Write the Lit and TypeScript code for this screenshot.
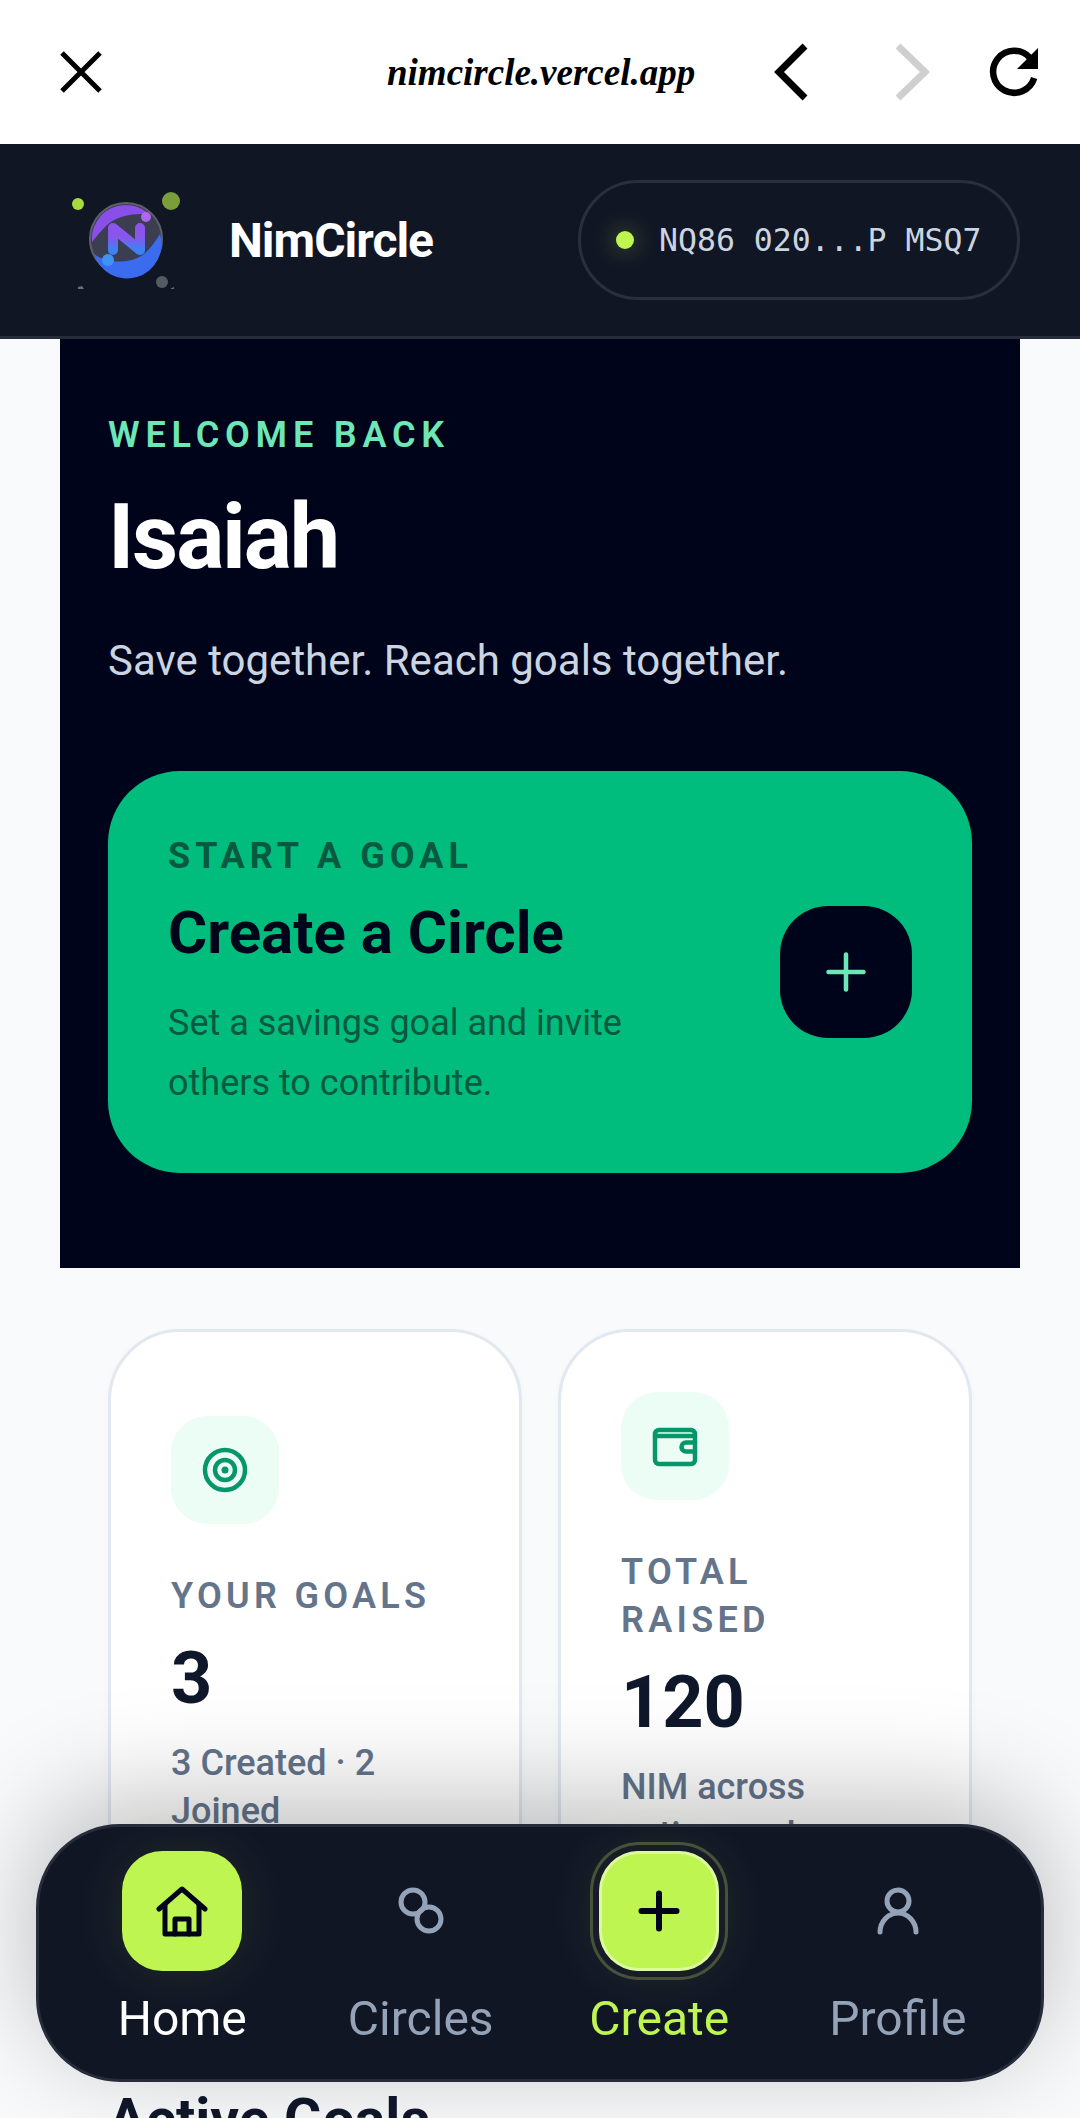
import { LitElement, css, html, svg } from "lit";
import { customElement } from "lit/decorators.js";

const navIcons = {
    home: svg`<path d="M4 25 27 5l23 20" /><path d="M10 20v30h34V20" /><path d="M20 50V35h14v15" />`,
    circles: svg`<circle cx="19" cy="18" r="12" /><circle cx="35" cy="35" r="12" />`,
    plus: svg`<path class="thick" d="M27 9.500v35M9.500 27h35" />`,
    user: svg`<circle cx="27" cy="17" r="11" /><path d="M9 48c0-10 8-19 18-19s18 9 18 19" />`,
};

@customElement("app-root")
export class AppRoot extends LitElement {
    static styles = css`
        :host {
            display: block;
            height: 100vh;
            overflow: hidden;
            background: #f8fafc;
            font-family: Roboto, sans-serif;
            color: #0f172a;
        }
        .chrome {
            height: 144px;
            background: #fff;
            display: flex;
            align-items: center;
        }
        .chrome svg {
            display: block;
            flex: none;
            fill: none;
        }
        .close {
            margin-left: 59px;
            stroke: #000;
        }
        .url {
            margin-left: 284px;
            width: 307px;
            font: italic 700 37px "Liberation Serif", serif;
            color: #000;
            white-space: nowrap;
        }
        .back {
            margin-left: 76px;
            stroke: #000;
        }
        .forward {
            margin-left: 78px;
            stroke: #cfcfcf;
        }
        .reload {
            margin-left: 56px;
            stroke: #000;
        }
        .topbar {
            height: 192px;
            background: #111625;
            border-bottom: 3px solid #272c3b;
            display: flex;
            align-items: center;
            justify-content: space-between;
            padding: 0 60px 0 54px;
        }
        .brand {
            display: flex;
            align-items: center;
            gap: 43px;
            font-size: 48px;
            font-weight: 700;
            letter-spacing: -1px;
            color: #fff;
        }
        .logo {
            display: block;
            width: 132px;
            height: 132px;
        }
        .wallet {
            box-sizing: border-box;
            width: 442px;
            height: 120px;
            border: 3px solid #2a2f3e;
            border-radius: 60px;
            display: flex;
            align-items: center;
            gap: 25px;
            padding-left: 35px;
            font: 31.5px "DejaVu Sans Mono", monospace;
            color: #cbd5e1;
            white-space: pre;
        }
        .dot {
            width: 18px;
            height: 18px;
            border-radius: 50%;
            background: #bef550;
            box-shadow: 0 0 24px rgba(190, 245, 80, 0.45);
        }
        .hero {
            margin: 0 60px;
            height: 929px;
            box-sizing: border-box;
            background: #00041a;
            padding: 69px 48px 0;
        }
        .eyebrow {
            font-size: 36px;
            line-height: 54px;
            font-weight: 600;
            letter-spacing: 5.8px;
            color: #6ee7b7;
        }
        h1 {
            margin: 26px 0 0;
            font-size: 90px;
            line-height: 99px;
            font-weight: 700;
            letter-spacing: -2.2px;
            color: #fff;
        }
        .tagline {
            margin: 44px 0 0;
            font-size: 42px;
            line-height: 60px;
            color: #cbd5e1;
        }
        .cta {
            box-sizing: border-box;
            height: 402px;
            margin-top: 80px;
            border-radius: 72px;
            background: #00bc7d;
            padding: 60px;
            display: flex;
            align-items: center;
            justify-content: space-between;
        }
        .cta-label {
            font-size: 36px;
            line-height: 48px;
            font-weight: 700;
            letter-spacing: 5px;
            color: #07593f;
        }
        .cta-title {
            margin-top: 14px;
            font-size: 60px;
            line-height: 78px;
            font-weight: 700;
            color: #00041a;
        }
        .cta-text {
            margin-top: 21px;
            max-width: 480px;
            font-size: 36px;
            line-height: 60px;
            color: #07593f;
        }
        .cta-btn {
            width: 132px;
            height: 132px;
            border-radius: 48px;
            background: #00041a;
            display: flex;
            align-items: center;
            justify-content: center;
            flex: none;
        }
        .cta-btn svg {
            fill: none;
            stroke: #6ee7b7;
            stroke-width: 4.5;
            stroke-linecap: round;
        }
        .stats {
            display: grid;
            grid-template-columns: 1fr 1fr;
            gap: 36px;
            margin: 61px 108px 0;
        }
        .stat {
            box-sizing: border-box;
            border: 3px solid #e2e8f0;
            border-radius: 72px;
            background: #fff;
            box-shadow: 0 3px 9px rgba(15, 23, 42, 0.03);
            padding: 60px;
            display: flex;
            flex-direction: column;
            justify-content: center;
        }
        .tile {
            width: 108px;
            height: 108px;
            border-radius: 36px;
            background: #ecfdf5;
            display: flex;
            align-items: center;
            justify-content: center;
            margin-bottom: 48px;
        }
        .tile svg {
            fill: none;
            stroke: #059669;
            stroke-width: 4.5;
            stroke-linecap: round;
            stroke-linejoin: round;
        }
        .tile .bullseye {
            fill: #059669;
            stroke: none;
        }
        .stat-label {
            font-size: 36px;
            line-height: 48px;
            font-weight: 600;
            letter-spacing: 4.3px;
            color: #64748b;
        }
        .stat-value {
            margin-top: 17px;
            font-size: 72px;
            line-height: 84px;
            font-weight: 700;
            color: #0f172a;
        }
        .stat-sub {
            margin-top: 18px;
            font-size: 36px;
            line-height: 48px;
            font-weight: 500;
            color: #64748b;
        }
        h2 {
            margin: 165px 108px 0;
            font-size: 57px;
            line-height: 66px;
            font-weight: 700;
            color: #0f172a;
        }
        .nav {
            position: fixed;
            left: 36px;
            right: 36px;
            bottom: 36px;
            box-sizing: border-box;
            height: 258px;
            padding: 24px 24px 0;
            background: #111625;
            border: 3px solid #272c3b;
            border-radius: 84px;
            box-shadow: 0 -24px 108px rgba(0, 0, 0, 0.26);
            display: grid;
            grid-template-columns: repeat(4, 1fr);
        }
        .nav-item {
            display: flex;
            flex-direction: column;
            align-items: center;
            gap: 18px;
            font-size: 48px;
            line-height: 60px;
            color: #94a3b8;
        }
        .nav-item.home {
            color: #fff;
        }
        .nav-item.create {
            color: #bef550;
        }
        .nav-icon {
            width: 120px;
            height: 120px;
            border-radius: 40px;
            display: flex;
            align-items: center;
            justify-content: center;
        }
        .nav-icon svg {
            fill: none;
            stroke: currentColor;
            stroke-width: 5;
            stroke-linecap: round;
            stroke-linejoin: round;
        }
        .nav-icon .thick {
            stroke-width: 6;
        }
        .home .nav-icon,
        .create .nav-icon {
            background: #bef550;
            color: #00041a;
        }
        .home .nav-icon {
            box-shadow: 0 0 60px rgba(190, 245, 80, 0.1);
        }
        .create .nav-icon {
            box-shadow:
                inset 0 0 0 3px rgba(255, 255, 255, 0.45),
                0 0 0 6px #171c28,
                0 0 0 9px #46523a,
                0 0 60px rgba(190, 245, 80, 0.12);
        }
    `;

    private navItem(cls: string, label: string, icon: keyof typeof navIcons) {
        return html`
            <div class="nav-item ${cls}">
                <div class="nav-icon">
                    <svg width="54" height="54" viewBox="0 0 54 54">${navIcons[icon]}</svg>
                </div>
                ${label}
            </div>
        `;
    }

    render() {
        return html`
            <div class="chrome">
                <svg class="close" width="44" height="44" viewBox="0 0 44 44" stroke-width="5">
                    <path d="M3 3l38 38M41 3 3 41" />
                </svg>
                <div class="url">nimcircle.vercel.app</div>
                <svg class="back" width="42" height="60" viewBox="0 0 42 60" stroke-width="7">
                    <path d="M35 4 9 30l26 26" />
                </svg>
                <svg class="forward" width="42" height="60" viewBox="0 0 42 60" stroke-width="7">
                    <path d="M8 4l27 26L8 56" />
                </svg>
                <svg class="reload" width="54" height="54" viewBox="0 0 54 54" stroke-width="6.5">
                    <path d="M46.200 33A21 21 0 1 1 42 13" />
                    <path d="M50 3v21H29z" fill="#000" stroke="none" />
                </svg>
            </div>
            <div class="topbar">
                <div class="brand">
                    <svg class="logo" viewBox="0 0 132 132">
                        <defs>
                            <linearGradient id="nfill" x1="0" y1="0" x2="0" y2="1">
                                <stop offset="0.4" stop-color="#8a55ea" />
                                <stop offset="1" stop-color="#3b82f6" />
                            </linearGradient>
                        </defs>
                        <circle cx="24" cy="30" r="6" fill="#a6da3e" />
                        <circle cx="117" cy="27" r="9" fill="#7a9e3a" />
                        <circle cx="108" cy="108" r="6" fill="#565a63" />
                        <path d="M24 113l4-1 2 3h-6z" fill="#6b6e78" />
                        <path d="M116 115l4-2v2z" fill="#6b6e78" />
                        <circle cx="72" cy="65" r="36" fill="#3b3d50" stroke="#5d5f6b" stroke-width="2" />
                        <path d="M38 68A34 34 0 0 1 96 41C82 38 62 42 52 52 46 58 41 64 38 68z" fill="#8a4fe8" />
                        <path d="M106 60A34 34 0 0 1 40 80C52 90 78 90 90 80 98 73 102 66 106 60z" fill="#3b6cf0" />
                        <path d="M59 76V54L86 76V54" fill="none" stroke="url(#nfill)" stroke-width="10" stroke-linecap="round" stroke-linejoin="round" />
                        <circle cx="92" cy="43" r="5" fill="#b264f2" />
                        <circle cx="54" cy="86" r="6" fill="#3f93f5" />
                    </svg>
                    NimCircle
                </div>
                <div class="wallet"><span class="dot"></span>NQ86 020...P MSQ7</div>
            </div>
            <section class="hero">
                <div class="eyebrow">WELCOME BACK</div>
                <h1>Isaiah</h1>
                <p class="tagline">Save together. Reach goals together.</p>
                <div class="cta">
                    <div>
                        <div class="cta-label">START A GOAL</div>
                        <div class="cta-title">Create a Circle</div>
                        <div class="cta-text">Set a savings goal and invite others to contribute.</div>
                    </div>
                    <div class="cta-btn">
                        <svg width="44" height="44" viewBox="0 0 44 44"><path d="M22 4.500v35M4.500 22h35" /></svg>
                    </div>
                </div>
            </section>
            <div class="stats">
                <div class="stat">
                    <div class="tile">
                        <svg width="54" height="54" viewBox="0 0 54 54">
                            <circle cx="27" cy="27" r="20" />
                            <circle cx="27" cy="27" r="10" />
                            <circle class="bullseye" cx="27" cy="27" r="3.500" />
                        </svg>
                    </div>
                    <div class="stat-label">YOUR GOALS</div>
                    <div class="stat-value">3</div>
                    <div class="stat-sub">3 Created · 2 Joined</div>
                </div>
                <div class="stat">
                    <div class="tile">
                        <svg width="54" height="54" viewBox="0 0 54 54">
                            <path d="M7 15a4 4 0 0 1 4-4h32a4 4 0 0 1 4 4v26a4 4 0 0 1-4 4H11a4 4 0 0 1-4-4z" />
                            <path d="M7 17h40" />
                            <path d="M47 23.500H38a4.500 4.500 0 0 0 0 9h9" />
                        </svg>
                    </div>
                    <div class="stat-label">TOTAL RAISED</div>
                    <div class="stat-value">120</div>
                    <div class="stat-sub">NIM across active goals</div>
                </div>
            </div>
            <h2>Active Goals</h2>
            <nav class="nav">
                ${this.navItem("home", "Home", "home")}
                ${this.navItem("", "Circles", "circles")}
                ${this.navItem("create", "Create", "plus")}
                ${this.navItem("", "Profile", "user")}
            </nav>
        `;
    }
}
